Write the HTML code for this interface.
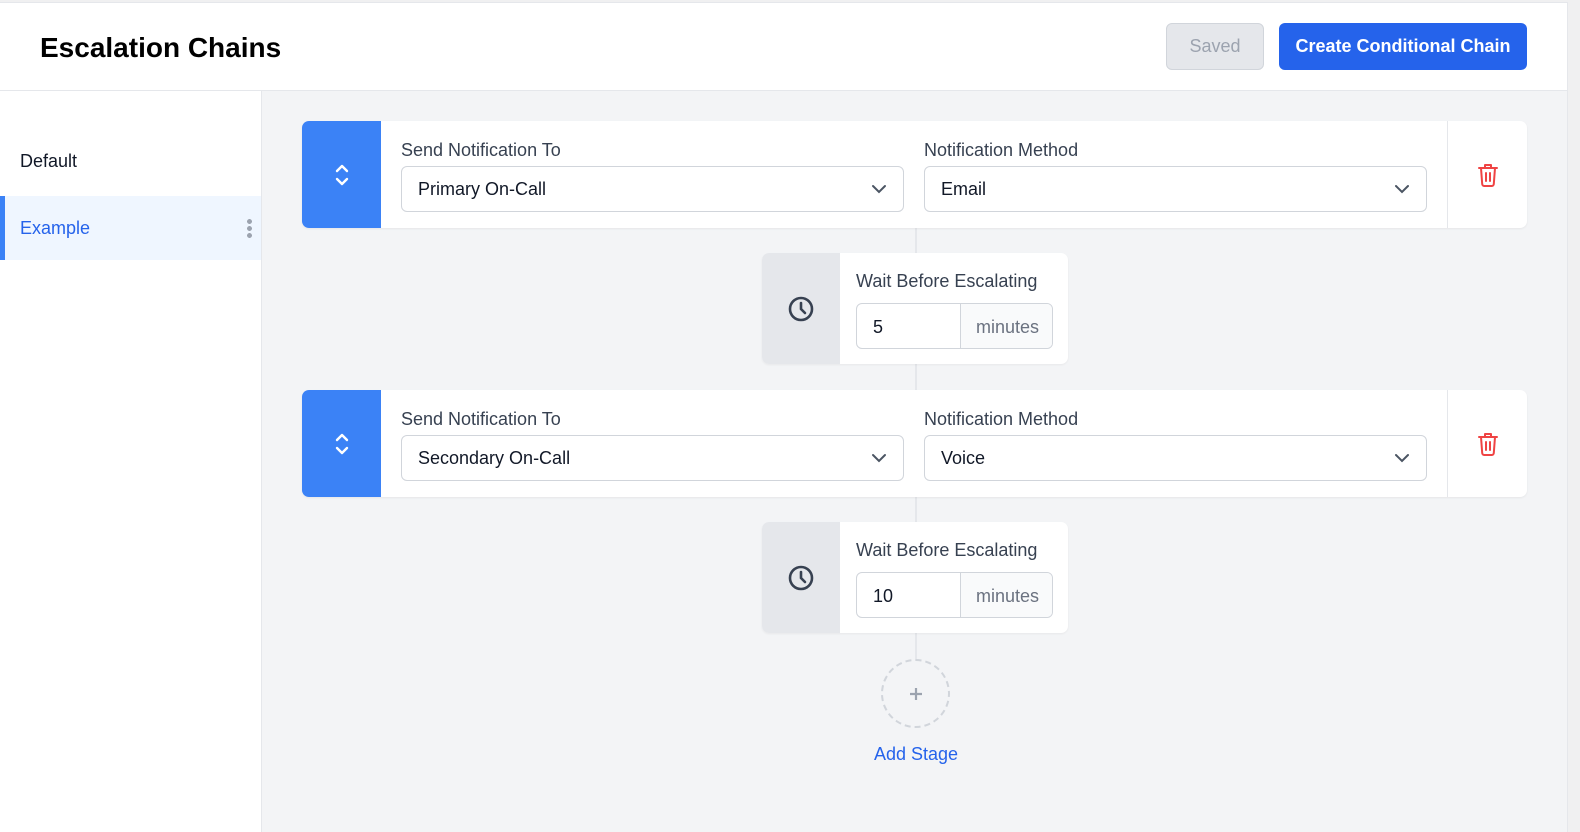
<!DOCTYPE html>
<html style="overflow:hidden"><head><style>
*{box-sizing:border-box;margin:0;padding:0}
html,body{width:1580px;height:832px;overflow:hidden}
body{background:#f0f0f1;font-family:"Liberation Sans",sans-serif;position:relative;color:#111827}
.page{position:absolute;left:0;top:2px;width:1568px;height:830px;background:#f3f4f6;border-top:1px solid #e5e7eb;border-right:1px solid #e5e7eb;overflow:hidden}
.hdr{position:absolute;left:0;top:0;width:100%;height:88px;background:#fff;border-bottom:1px solid #e5e7eb}
.hdr h1{position:absolute;left:40px;top:29px;font-size:28px;font-weight:bold;color:#000}
.btn{position:absolute;top:20px;height:47px;border-radius:6px;font-size:18px;font-weight:bold;display:flex;align-items:center;justify-content:center}
.side{position:absolute;left:0;top:88px;width:262px;height:742px;background:#fff;border-right:1px solid #e5e7eb}
.side .it{position:absolute;left:0;width:261px;height:64px;font-size:18px;padding-left:20px;display:flex;align-items:center}
.abs{position:absolute}
.card{position:absolute;left:302px;width:1225px;height:107px;background:#fff;border-radius:7px;box-shadow:0 1px 2px rgba(0,0,0,.06);overflow:hidden}
.handle{position:absolute;left:0;top:0;width:79px;height:107px;background:#3b82f6;display:flex;align-items:center;justify-content:center}
.lbl{position:absolute;font-size:18px;color:#374151}
.sel{position:absolute;height:46px;width:503px;border:1px solid #d1d5db;border-radius:6px;font-size:18px;padding-left:16px;display:flex;align-items:center;color:#111827}
.sel svg{position:absolute;right:16px;top:16px}
.trash{position:absolute;left:1145px;top:0;width:80px;height:107px;border-left:1px solid #e5e7eb;display:flex;align-items:center;justify-content:center}
.wait{position:absolute;left:762px;width:306px;height:111px;background:#fff;border-radius:7px;overflow:hidden;box-shadow:0 1px 2px rgba(0,0,0,.05)}
.wait .g{position:absolute;left:0;top:0;width:78px;height:111px;background:#e5e7eb;display:flex;align-items:center;justify-content:center}
.wait .l{position:absolute;left:94px;top:18px;font-size:18px;color:#374151}
.wait .inp{position:absolute;left:94px;top:50px;width:197px;height:46px;border:1px solid #d1d5db;border-radius:6px;overflow:hidden;font-size:18px}
.wait .inp .v{position:absolute;left:16px;top:13px}
.wait .inp .u{position:absolute;left:103px;top:0;width:94px;height:46px;background:#f9fafb;border-left:1px solid #d1d5db;color:#6b7280;display:flex;align-items:center;justify-content:center}
.line{position:absolute;left:915px;width:2px;background:#e5e7eb}
</style></head><body>
<div class="page">
<div class="hdr"><h1>Escalation Chains</h1>
<div class="btn" style="left:1166px;width:98px;background:#e5e7eb;color:#9ca3af;font-weight:normal;border:1px solid #d1d5db">Saved</div>
<div class="btn" style="left:1279px;width:248px;background:#2563eb;color:#fff">Create Conditional Chain</div>
</div>
<div class="side">
<div class="it" style="top:38px">Default</div>
<div class="it" style="top:105px;background:#eff6ff;color:#2563eb;border-left:5px solid #3b82f6;padding-left:15px">Example
<span class="abs" style="right:9px;top:22px;width:5px;height:20px;background:radial-gradient(circle,#9ca3af 2.3px,transparent 2.6px) 0 0/5px 7px"></span></div>
</div>

<div class="line" style="top:224px;height:165px"></div>
<div class="line" style="top:493px;height:165px"></div>

<div class="card" style="top:118px">
<div class="handle"><svg width="16" height="26" viewBox="0 0 16 26" fill="none" stroke="#fff" stroke-width="2.4" stroke-linecap="round" stroke-linejoin="round"><path d="M3 9l5-5 5 5M3 17l5 5 5-5"/></svg></div>
<div class="lbl" style="left:99px;top:19px">Send Notification To</div>
<div class="sel" style="left:99px;top:45px">Primary On-Call<svg width="16" height="12" viewBox="0 0 16 12" fill="none" stroke="#4b5563" stroke-width="2" stroke-linecap="round"><path d="M2 3l6 6 6-6"/></svg></div>
<div class="lbl" style="left:622px;top:19px">Notification Method</div>
<div class="sel" style="left:622px;top:45px">Email<svg width="16" height="12" viewBox="0 0 16 12" fill="none" stroke="#4b5563" stroke-width="2" stroke-linecap="round"><path d="M2 3l6 6 6-6"/></svg></div>
<div class="trash"><svg width="22" height="24" viewBox="0 0 22 24" fill="none" stroke="#ef4444" stroke-width="2" stroke-linecap="round" stroke-linejoin="round"><path d="M2 5h18M8 5V2h6v3M4 5l1.2 16a2 2 0 0 0 2 2h7.6a2 2 0 0 0 2-2L18 5M9 10v8M13 10v8"/></svg></div>
</div>

<div class="wait" style="top:250px"><div class="g"><svg width="28" height="28" viewBox="0 0 28 28" fill="none" stroke="#374151" stroke-width="2.6" stroke-linecap="round"><circle cx="14" cy="14" r="11"/><path d="M14 8v6l4 4"/></svg></div>
<div class="l">Wait Before Escalating</div><div class="inp"><span class="v">5</span><span class="u">minutes</span></div></div>

<div class="card" style="top:387px">
<div class="handle"><svg width="16" height="26" viewBox="0 0 16 26" fill="none" stroke="#fff" stroke-width="2.4" stroke-linecap="round" stroke-linejoin="round"><path d="M3 9l5-5 5 5M3 17l5 5 5-5"/></svg></div>
<div class="lbl" style="left:99px;top:19px">Send Notification To</div>
<div class="sel" style="left:99px;top:45px">Secondary On-Call<svg width="16" height="12" viewBox="0 0 16 12" fill="none" stroke="#4b5563" stroke-width="2" stroke-linecap="round"><path d="M2 3l6 6 6-6"/></svg></div>
<div class="lbl" style="left:622px;top:19px">Notification Method</div>
<div class="sel" style="left:622px;top:45px">Voice<svg width="16" height="12" viewBox="0 0 16 12" fill="none" stroke="#4b5563" stroke-width="2" stroke-linecap="round"><path d="M2 3l6 6 6-6"/></svg></div>
<div class="trash"><svg width="22" height="24" viewBox="0 0 22 24" fill="none" stroke="#ef4444" stroke-width="2" stroke-linecap="round" stroke-linejoin="round"><path d="M2 5h18M8 5V2h6v3M4 5l1.2 16a2 2 0 0 0 2 2h7.6a2 2 0 0 0 2-2L18 5M9 10v8M13 10v8"/></svg></div>
</div>

<div class="wait" style="top:519px"><div class="g"><svg width="28" height="28" viewBox="0 0 28 28" fill="none" stroke="#374151" stroke-width="2.6" stroke-linecap="round"><circle cx="14" cy="14" r="11"/><path d="M14 8v6l4 4"/></svg></div>
<div class="l">Wait Before Escalating</div><div class="inp"><span class="v">10</span><span class="u">minutes</span></div></div>

<div class="abs" style="left:881px;top:656px;width:69px;height:69px;border:2px dashed #d1d5db;border-radius:50%;background:#f3f4f6;display:flex;align-items:center;justify-content:center"><svg width="14" height="14" viewBox="0 0 14 14" stroke="#9ca3af" stroke-width="2.2"><path d="M7 1v12M1 7h12"/></svg></div>
<div class="abs" style="left:840px;top:741px;width:152px;text-align:center;font-size:18px;color:#2563eb">Add Stage</div>
</div>
</body></html>
